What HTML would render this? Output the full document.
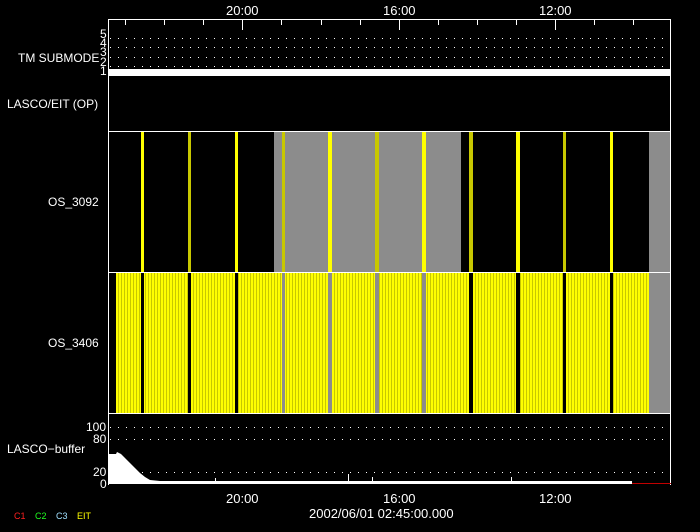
<!DOCTYPE html><html><head><style>
body{margin:0;background:#000;width:700px;height:532px;overflow:hidden;position:relative;font-family:"Liberation Sans",sans-serif;color:#fff;font-size:12px}
.a{position:absolute}
.t{position:absolute;white-space:nowrap;line-height:1}
.dot{position:absolute;left:110px;width:560px;height:1px;background:repeating-linear-gradient(90deg,#fff 0 1px,transparent 1px 8px)}
</style></head><body>
<div class="a" style="left:108px;top:19px;width:563px;height:466px;border:1px solid #fff;border-bottom:none;box-sizing:border-box"></div>
<div class="a" style="left:108px;top:131px;width:563px;height:1px;background:#fff"></div>
<div class="a" style="left:108px;top:272px;width:563px;height:1px;background:#fff"></div>
<div class="a" style="left:108px;top:413px;width:563px;height:1px;background:#fff"></div>
<div class="t" style="left:226px;top:4px;font-size:13px">20:00</div>
<div class="t" style="left:383px;top:4px;font-size:13px">16:00</div>
<div class="t" style="left:539px;top:4px;font-size:13px">12:00</div>
<svg class="a" style="left:0;top:0" width="700" height="532">
<g stroke="#fff" stroke-width="1">
<line x1="125.5" y1="20" x2="125.5" y2="25"/><line x1="164.5" y1="20" x2="164.5" y2="25"/><line x1="203.5" y1="20" x2="203.5" y2="25"/><line x1="242.5" y1="20" x2="242.5" y2="30"/>
<line x1="281.5" y1="20" x2="281.5" y2="25"/><line x1="321.5" y1="20" x2="321.5" y2="25"/><line x1="360.5" y1="20" x2="360.5" y2="25"/><line x1="399.5" y1="20" x2="399.5" y2="30"/>
<line x1="438.5" y1="20" x2="438.5" y2="25"/><line x1="477.5" y1="20" x2="477.5" y2="25"/><line x1="516.5" y1="20" x2="516.5" y2="25"/><line x1="555.5" y1="20" x2="555.5" y2="30"/>
<line x1="594.5" y1="20" x2="594.5" y2="25"/><line x1="633.5" y1="20" x2="633.5" y2="25"/>
</g>
</svg>
<div class="dot" style="top:38px"></div><div class="dot" style="top:47px"></div><div class="dot" style="top:57px"></div><div class="dot" style="top:66px"></div>
<div class="t" style="left:100px;top:28px">5</div>
<div class="t" style="left:100px;top:37px">4</div>
<div class="t" style="left:100px;top:46px">3</div>
<div class="t" style="left:100px;top:56px">2</div>
<div class="t" style="left:100px;top:65px">1</div>
<div class="a" style="left:109px;top:69px;width:562px;height:7px;background:#fff"></div>
<div class="t" style="left:18px;top:52px">TM SUBMODE</div>
<div class="t" style="left:7px;top:98px">LASCO/EIT (OP)</div>
<div class="t" style="left:48px;top:196px">OS_3092</div>
<div class="t" style="left:48px;top:337px">OS_3406</div>
<div class="t" style="left:7px;top:443px">LASCO−buffer</div>
<div class="a" style="left:274px;top:132px;width:187px;height:140px;background:#8c8c8c"></div>
<div class="a" style="left:649px;top:132px;width:21px;height:140px;background:#8c8c8c"></div>
<div class="a" style="left:116px;top:273px;width:533px;height:140px;background:repeating-linear-gradient(90deg,#ffff00 0 2px,#c8c800 2px 3px)"></div>
<div class="a" style="left:649px;top:273px;width:21px;height:140px;background:#8c8c8c"></div>
<svg class="a" style="left:0;top:0" width="700" height="532">
<g>
<rect x="141" y="132" width="3" height="140" fill="#ffff00"/><rect x="141" y="273" width="3" height="140" fill="#000"/>
<rect x="188" y="132" width="3" height="140" fill="#c8c800"/><rect x="188" y="273" width="3" height="140" fill="#000"/>
<rect x="235" y="132" width="3" height="140" fill="#ffff00"/><rect x="235" y="273" width="3" height="140" fill="#000"/>
<rect x="282" y="132" width="3" height="140" fill="#c8c800"/><rect x="282" y="273" width="3" height="140" fill="#8c8c8c"/>
<rect x="328" y="132" width="4" height="140" fill="#ffff00"/><rect x="328" y="273" width="4" height="140" fill="#8c8c8c"/>
<rect x="375" y="132" width="4" height="140" fill="#c8c800"/><rect x="375" y="273" width="4" height="140" fill="#8c8c8c"/>
<rect x="422" y="132" width="4" height="140" fill="#ffff00"/><rect x="422" y="273" width="4" height="140" fill="#8c8c8c"/>
<rect x="469" y="132" width="4" height="140" fill="#c8c800"/><rect x="469" y="273" width="4" height="140" fill="#000"/>
<rect x="516" y="132" width="4" height="140" fill="#ffff00"/><rect x="516" y="273" width="4" height="140" fill="#000"/>
<rect x="563" y="132" width="3" height="140" fill="#c8c800"/><rect x="563" y="273" width="3" height="140" fill="#000"/>
<rect x="610" y="132" width="3" height="140" fill="#ffff00"/><rect x="610" y="273" width="3" height="140" fill="#000"/>
</g>
<polygon fill="#fff" points="109,484 109,454 116,454 117,452 121,454 125,458 130,463 135,468 140,473 145,477 150,480 160,481 632,481 632,484"/>
<g stroke="#fff"><line x1="215.5" y1="478" x2="215.5" y2="481"/><line x1="348.5" y1="474" x2="348.5" y2="481"/><line x1="372.5" y1="477" x2="372.5" y2="481"/><line x1="511.5" y1="477" x2="511.5" y2="481"/></g>
<line x1="632" y1="483.5" x2="671" y2="483.5" stroke="#c00000"/>
</svg>
<div class="dot" style="top:427px"></div><div class="dot" style="top:439px"></div><div class="dot" style="top:472px"></div>
<div class="t" style="left:86px;top:421px">100</div>
<div class="t" style="left:93px;top:433px">80</div>
<div class="t" style="left:93px;top:466px">20</div>
<div class="t" style="left:100px;top:478px">0</div>
<div class="t" style="left:226px;top:492px;font-size:13px">20:00</div>
<div class="t" style="left:383px;top:492px;font-size:13px">16:00</div>
<div class="t" style="left:539px;top:492px;font-size:13px">12:00</div>
<div class="t" style="left:309px;top:507px;font-size:13px">2002/06/01 02:45:00.000</div>
<div class="t" style="left:14px;top:512px;font-size:9px;color:#ff2020">C1</div>
<div class="t" style="left:35px;top:512px;font-size:9px;color:#20ff20">C2</div>
<div class="t" style="left:56px;top:512px;font-size:9px;color:#a0e0ff">C3</div>
<div class="t" style="left:77px;top:512px;font-size:9px;color:#ffff00">EIT</div>
</body></html>
